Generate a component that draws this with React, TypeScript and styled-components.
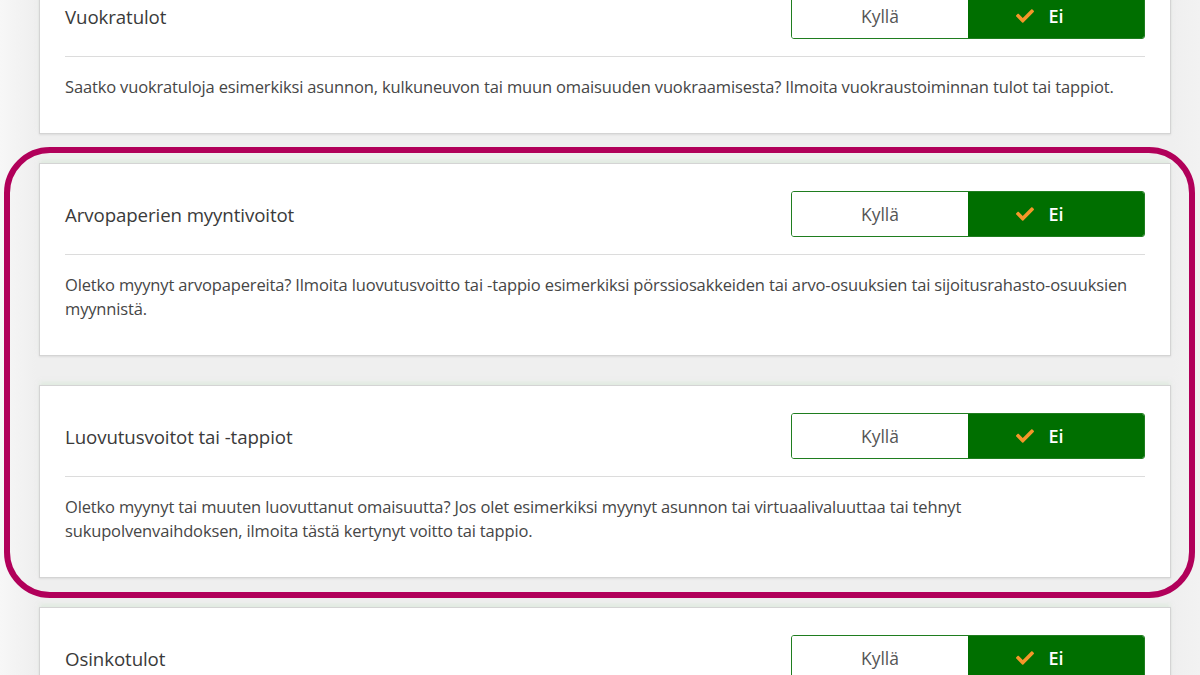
import React from "react";
import styled, { createGlobalStyle } from "styled-components";
import { FaCheck } from "react-icons/fa";

const Global = createGlobalStyle`
  html, body { margin: 0; padding: 0; }
  body {
    background: #efefef;
    font-family: "Open Sans", "Noto Sans", "Liberation Sans", sans-serif;
    overflow: hidden;
    width: 1200px;
    height: 675px;
  }
`;

const Page = styled.div`
  position: relative;
  width: 1200px;
  height: 675px;
  overflow: hidden;
  background: linear-gradient(90deg, #f7f7f7 0px, #efefef 36px, #efefef 1172px, #f2f2f2 1200px);
`;

const List = styled.div`
  display: flex;
  flex-direction: column;
  gap: 29px;
  margin-top: -35px;
  padding-left: 39px;
  width: 1132px;
`;

const Card = styled.section`
  background: #fff;
  border: 1px solid #d4d4d4;
  box-shadow: 0 -4px 4px -1px rgba(214, 232, 214, 0.55), 0 1px 2px rgba(0, 0, 0, 0.08);
  padding: 27px 25px 34px 25px;
`;

const Header = styled.div`
  display: flex;
  align-items: center;
  justify-content: space-between;
  padding-bottom: 17px;
  border-bottom: 1px solid #dcdcdc;
`;

const Title = styled.h3`
  margin: 0;
  font-size: 18.7px;
  font-weight: 400;
  color: #3a3a3a;
  letter-spacing: -0.1px;
`;

const Toggle = styled.div`
  display: flex;
  width: 354px;
  height: 46px;
  border: 1.5px solid #1f7d1f;
  border-radius: 3px;
  overflow: hidden;
  box-sizing: border-box;
`;

const Option = styled.button<{ $active?: boolean }>`
  flex: 1;
  display: flex;
  align-items: center;
  justify-content: center;
  border: none;
  margin: 0;
  padding: 0;
  font-family: inherit;
  font-size: ${(p) => (p.$active ? "18px" : "17.5px")};
  font-weight: ${(p) => (p.$active ? 600 : 400)};
  color: ${(p) => (p.$active ? "#ffffff" : "#555555")};
  background: ${(p) => (p.$active ? "#006f00" : "#ffffff")};
  cursor: pointer;
`;

const CheckMark = styled.span`
  display: inline-flex;
  color: #f5962a;
  margin-left: -32px;
  margin-right: 12px;
  width: 20px;
`;

const Description = styled.p`
  margin: 18px 0 0 0;
  padding-right: 10px;
  font-size: 16.5px;
  line-height: 24px;
  color: #464646;
  letter-spacing: -0.15px;
`;

const Highlight = styled.div`
  position: absolute;
  left: 4px;
  top: 147px;
  width: 1191px;
  height: 451px;
  box-sizing: border-box;
  border: 6.5px solid #b1005a;
  border-radius: 46px;
  pointer-events: none;
`;

type Item = { title: string; text?: string };

const items: Item[] = [
  {
    title: "Vuokratulot",
    text: "Saatko vuokratuloja esimerkiksi asunnon, kulkuneuvon tai muun omaisuuden vuokraamisesta? Ilmoita vuokraustoiminnan tulot tai tappiot.",
  },
  {
    title: "Arvopaperien myyntivoitot",
    text: "Oletko myynyt arvopapereita? Ilmoita luovutusvoitto tai -tappio esimerkiksi pörssiosakkeiden tai arvo-osuuksien tai sijoitusrahasto-osuuksien myynnistä.",
  },
  {
    title: "Luovutusvoitot tai -tappiot",
    text: "Oletko myynyt tai muuten luovuttanut omaisuutta? Jos olet esimerkiksi myynyt asunnon tai virtuaalivaluuttaa tai tehnyt sukupolvenvaihdoksen, ilmoita tästä kertynyt voitto tai tappio.",
  },
  {
    title: "Osinkotulot",
  },
];

const QuestionCard: React.FC<{ item: Item }> = ({ item }) => (
  <Card>
    <Header>
      <Title>{item.title}</Title>
      <Toggle>
        <Option>Kyllä</Option>
        <Option $active>
          <CheckMark>
            <FaCheck size={18} />
          </CheckMark>
          Ei
        </Option>
      </Toggle>
    </Header>
    {item.text && <Description>{item.text}</Description>}
  </Card>
);

export default function App() {
  return (
    <>
      <Global />
      <Page>
        <List>
          {items.map((it) => (
            <QuestionCard key={it.title} item={it} />
          ))}
        </List>
        <Highlight />
      </Page>
    </>
  );
}
